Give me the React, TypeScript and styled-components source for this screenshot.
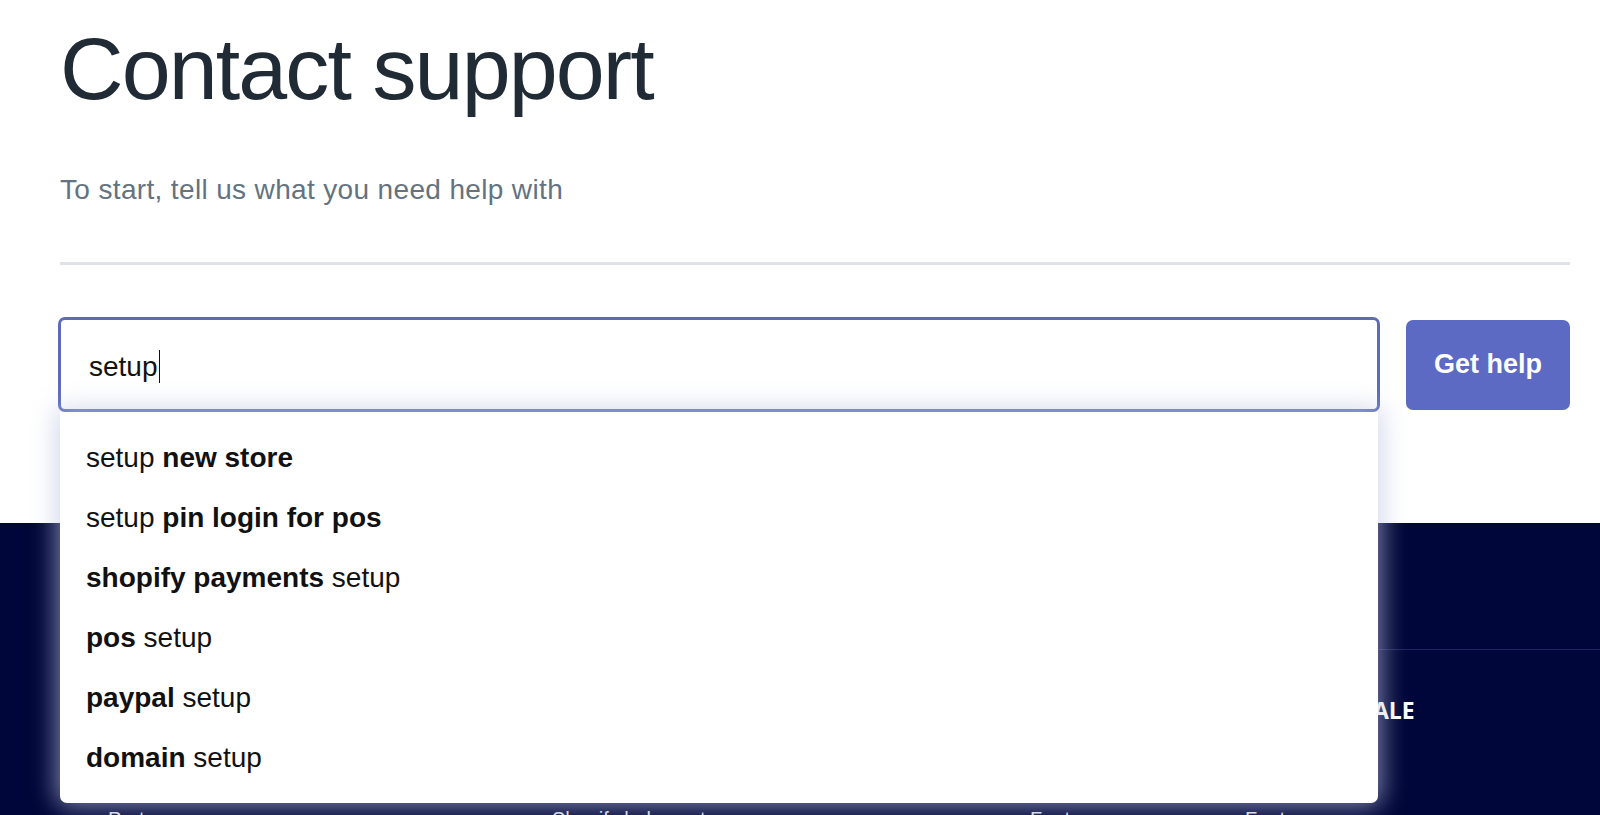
import React from 'react';
import styled, { createGlobalStyle } from 'styled-components';

const GlobalStyle = createGlobalStyle`
  html, body {
    margin: 0;
    padding: 0;
    background: #000639;
  }
  body {
    font-family: 'Liberation Sans', Arial, sans-serif;
    overflow: hidden;
  }
`;

const Page = styled.div`
  width: 1600px;
  min-height: 815px;
  background: #000639;
`;

const Top = styled.section`
  background: #fff;
  padding: 25px 30px 111px 60px;
`;

const Title = styled.h1`
  margin: 0;
  font-size: 88px;
  line-height: 88px;
  font-weight: 400;
  letter-spacing: -1.9px;
  color: #212b36;
`;

const Lead = styled.p`
  margin: 60px 0 0;
  font-size: 28px;
  line-height: 34px;
  letter-spacing: 0.35px;
  color: #637381;
`;

const Divider = styled.hr`
  margin: 55px 0 0;
  border: 0;
  height: 3px;
  background: #dfe3e8;
`;

const Form = styled.div`
  display: flex;
  align-items: center;
  gap: 26px;
  margin: 52px 0 0 -2px;
`;

const Field = styled.div`
  position: relative;
  flex: 1;
`;

const Input = styled.div`
  box-sizing: border-box;
  height: 95px;
  display: flex;
  align-items: center;
  padding: 4px 0 0 28px;
  border: 3px solid #5d6bb9;
  border-radius: 7px;
  background: #fff;
  font-size: 28px;
  color: #111;
`;

const Caret = styled.span`
  display: inline-block;
  width: 1.5px;
  height: 33px;
  margin-left: 1px;
  background: #111;
`;

const Button = styled.button`
  width: 164px;
  height: 90px;
  border: 0;
  border-radius: 7px;
  background: #5c6ac4;
  color: #fff;
  font-family: 'Liberation Sans', Arial, sans-serif;
  font-size: 27px;
  font-weight: 700;
  cursor: pointer;
`;

const Suggestions = styled.ul`
  position: absolute;
  top: 100%;
  left: 2px;
  right: 2px;
  z-index: 2;
  margin: 0;
  padding: 16px 0 15px;
  list-style: none;
  background: #fff;
  border-radius: 0 0 7px 7px;
  box-shadow: 0 0 26px 3px rgba(190, 196, 226, 0.7);
`;

const Suggestion = styled.li`
  height: 60px;
  line-height: 60px;
  padding-left: 26px;
  font-size: 28px;
  color: #111;
  b {
    font-weight: 700;
  }
`;

const Footer = styled.footer`
  background: #000639;
  padding-top: 126px;
`;

const FooterRule = styled.div`
  height: 1px;
  margin-left: 60px;
  background: #1f2560;
`;

const Columns = styled.div`
  display: grid;
  grid-template-columns: 444px 478px 215px 1fr;
  padding: 46px 0 0 108px;
`;

const Column = styled.div`
  display: flex;
  flex-direction: column;
  gap: 28px;
`;

const Heading = styled.h4`
  margin: 0;
  font-family: 'Open Sans', 'Liberation Sans', sans-serif;
  font-size: 23px;
  line-height: 28px;
  font-weight: 700;
  text-transform: uppercase;
  color: #fff;
`;

const FooterLink = styled.a`
  font-size: 20px;
  line-height: 26px;
  color: #dfe3e8;
  text-decoration: none;
`;

const suggestions: { text: string; bold: string; boldFirst: boolean }[] = [
  { text: 'setup', bold: 'new store', boldFirst: false },
  { text: 'setup', bold: 'pin login for pos', boldFirst: false },
  { text: 'setup', bold: 'shopify payments', boldFirst: true },
  { text: 'setup', bold: 'pos', boldFirst: true },
  { text: 'setup', bold: 'paypal', boldFirst: true },
  { text: 'setup', bold: 'domain', boldFirst: true },
];

const footerColumns = [
  { title: 'Shopify', links: ['Contact', 'Partner program'] },
  { title: 'Support', links: ['Merchant support', 'Shopify help center'] },
  { title: 'Online store', links: ['Sell online', 'Features'] },
  { title: 'Point of sale', links: ['Point of sale', 'Features'] },
];

const App: React.FC = () => {
  return (
    <Page>
      <GlobalStyle />
      <Top>
        <Title>Contact support</Title>
        <Lead>To start, tell us what you need help with</Lead>
        <Divider />
        <Form>
          <Field>
            <Input>
              setup
              <Caret />
            </Input>
            <Suggestions>
              {suggestions.map((s) => (
                <Suggestion key={s.bold}>
                  {s.boldFirst ? (
                    <>
                      <b>{s.bold}</b> {s.text}
                    </>
                  ) : (
                    <>
                      {s.text} <b>{s.bold}</b>
                    </>
                  )}
                </Suggestion>
              ))}
            </Suggestions>
          </Field>
          <Button>Get help</Button>
        </Form>
      </Top>
      <Footer>
        <FooterRule />
        <Columns>
          {footerColumns.map((col) => (
            <Column key={col.title}>
              <Heading>{col.title}</Heading>
              {col.links.map((l) => (
                <FooterLink key={l} href="#">
                  {l}
                </FooterLink>
              ))}
            </Column>
          ))}
        </Columns>
      </Footer>
    </Page>
  );
};

export default App;
